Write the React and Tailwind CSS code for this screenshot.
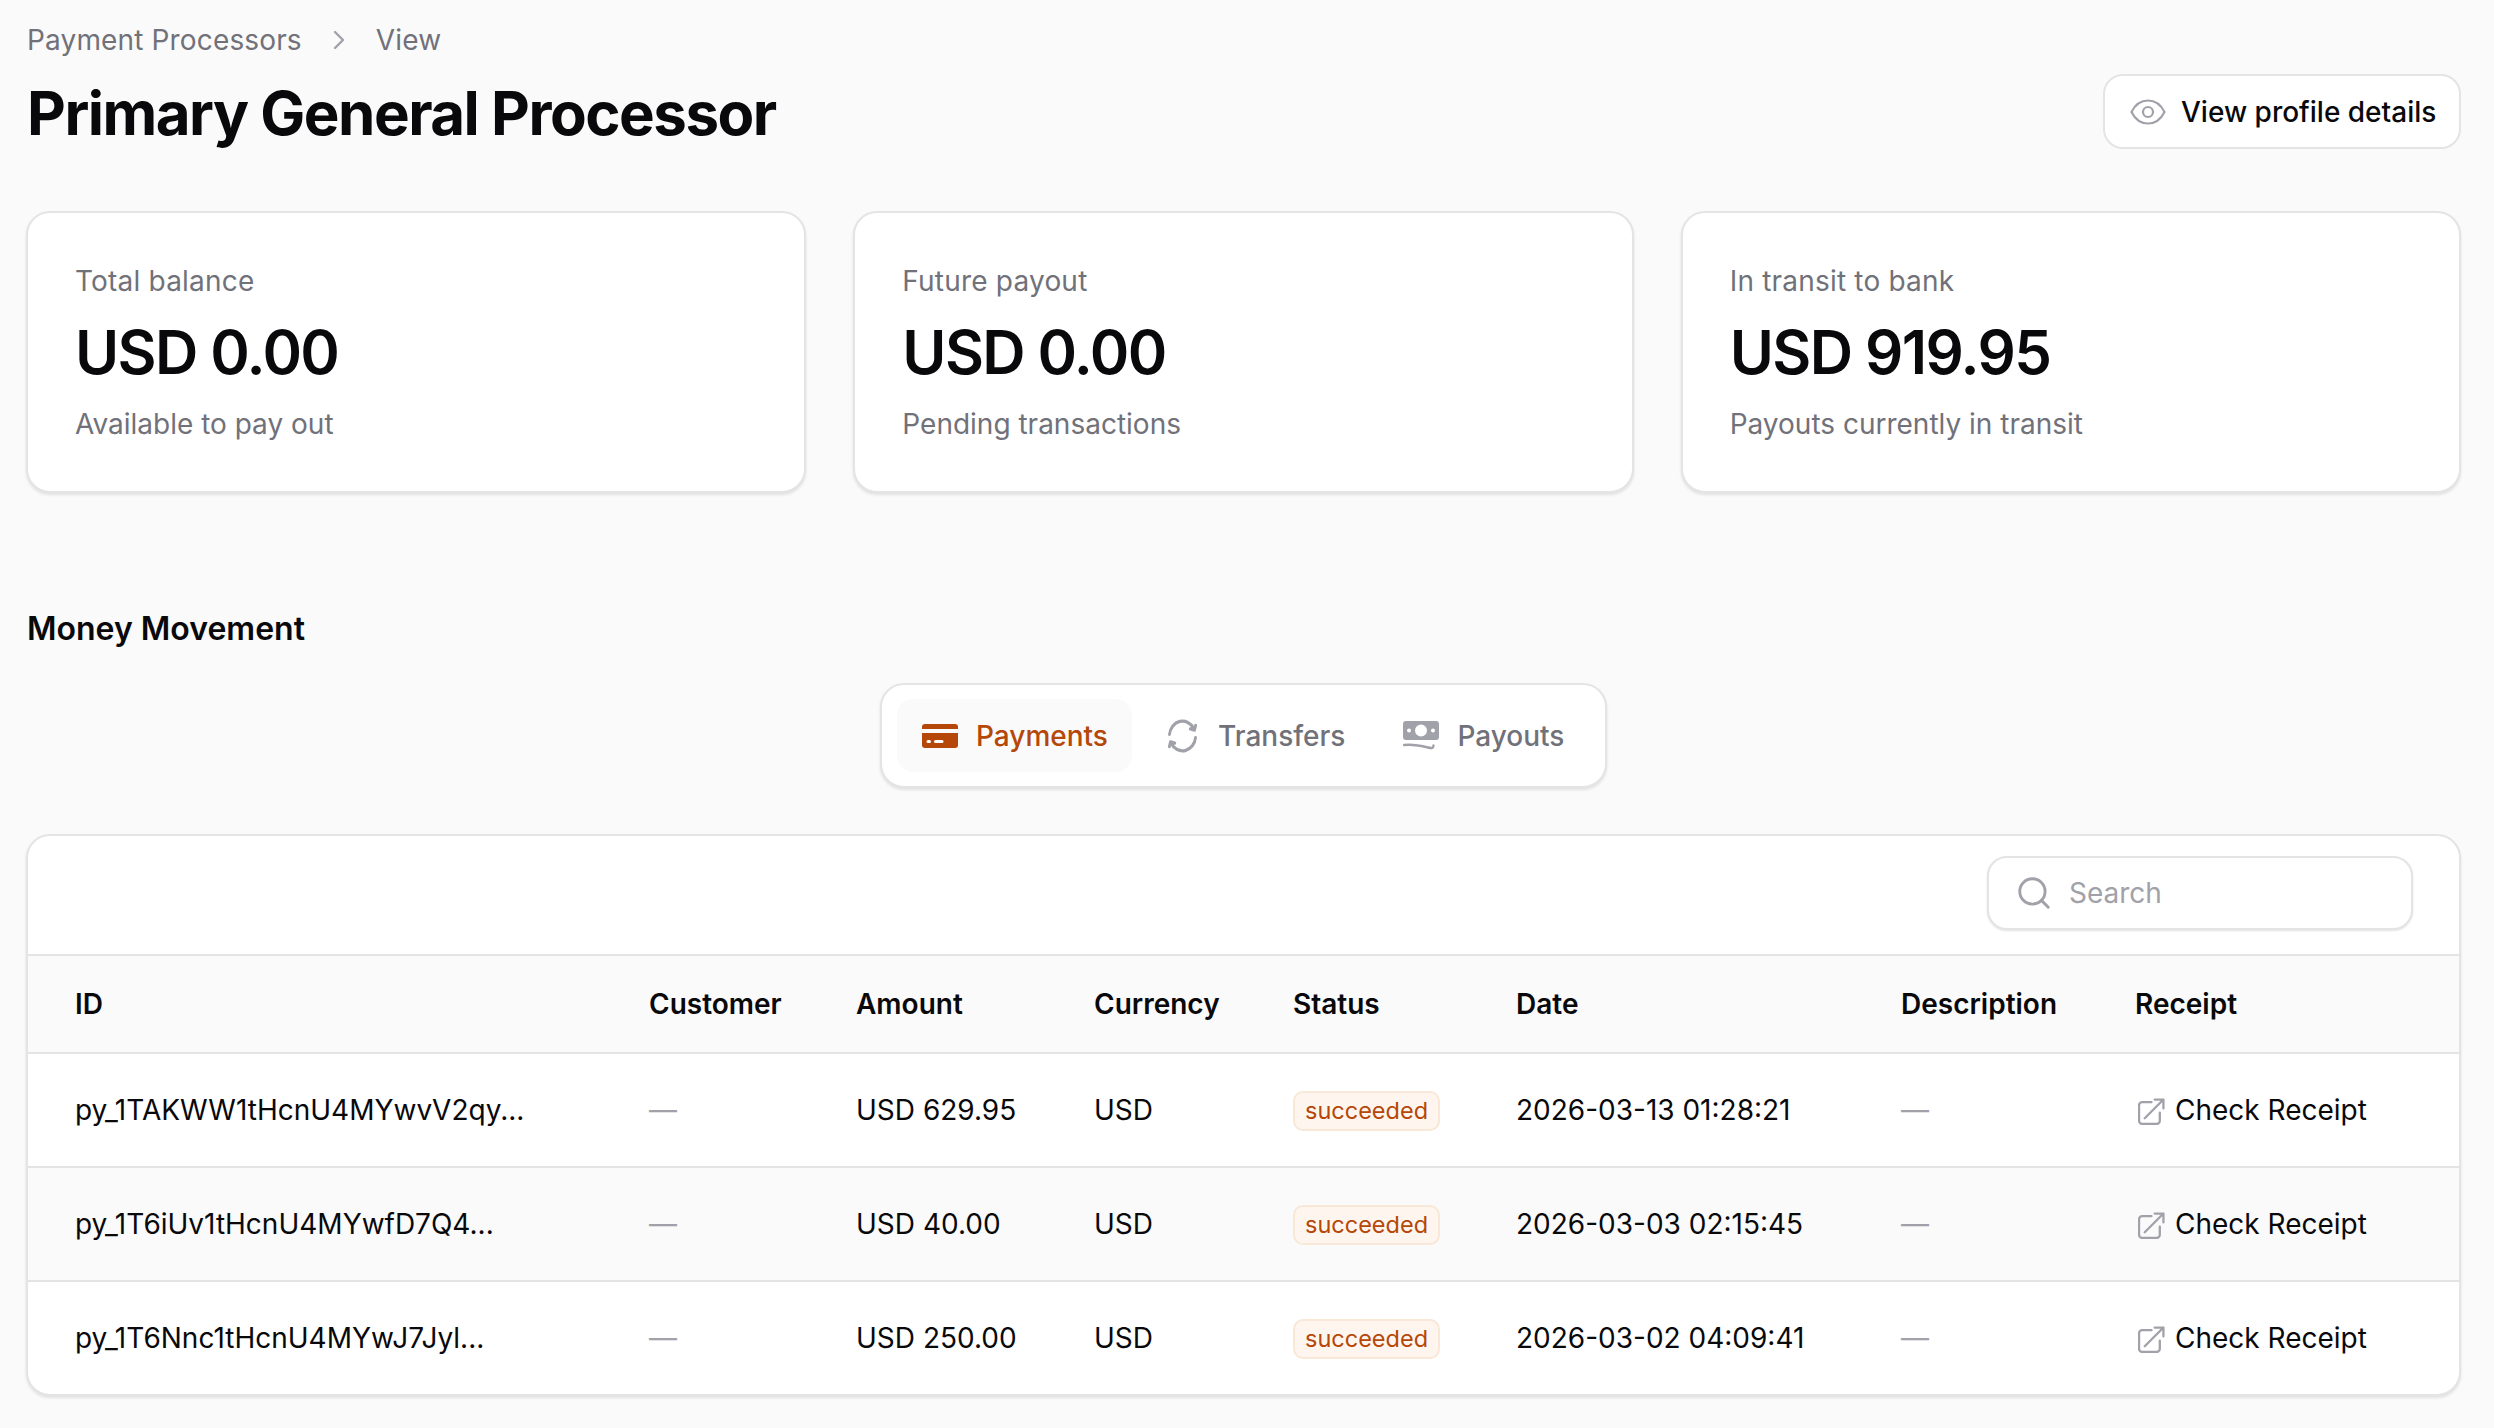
import React from "react";
import { ChevronRight, Search } from "lucide-react";

const FONT = "[font-family:Inter,'Noto_Sans',sans-serif]";

const CardIcon = ({ className }) => (
  <svg viewBox="0 0 36 24" className={className} aria-hidden="true">
    <path d="M3 0h30a3 3 0 0 1 3 3v2H0V3a3 3 0 0 1 3-3Z" fill="#b54708" />
    <path d="M0 9h36v12a3 3 0 0 1-3 3H3a3 3 0 0 1-3-3V9Z" fill="#b54708" />
    <rect x="4.5" y="16" width="4.5" height="3" rx="1.5" fill="#fff" />
    <rect x="12" y="16" width="9.5" height="3" rx="1.5" fill="#fff" />
  </svg>
);

const TransferIcon = ({ className }) => (
  <svg viewBox="0 0 24 24" preserveAspectRatio="none" fill="none" stroke="#a1a1aa" strokeWidth="1.9" strokeLinecap="round" strokeLinejoin="round" className={className} aria-hidden="true">
    <path d="M20.453 12.893A8.5 8.5 0 0 1 4.638 16.25l-.25-.433M3.547 11.107A8.5 8.5 0 0 1 19.362 7.75l.25.433M3.494 18.066l.732-2.732 2.732.732m10.085-8.132 2.732.732.732-2.732" />
  </svg>
);

const MoneyIcon = ({ className }) => (
  <svg viewBox="0 0 36 30" className={className} aria-hidden="true">
    <path fillRule="evenodd" clipRule="evenodd" d="M3 0h30a3 3 0 0 1 3 3v13a3 3 0 0 1-3 3H3a3 3 0 0 1-3-3V3a3 3 0 0 1 3-3Zm15 3.500a6 6 0 1 0 0 12 6 6 0 0 0 0-12ZM6 7.500a2 2 0 1 0 0 4 2 2 0 0 0 0-4Zm24 0a2 2 0 1 0 0 4 2 2 0 0 0 0-4Z" fill="#a1a1aa" />
    <path d="M1 24c10-1 18 1 24 2.500 4 1 5.500 .5 5.500-2" fill="none" stroke="#a1a1aa" strokeWidth="2.400" strokeLinecap="round" />
  </svg>
);

const EyeIcon = ({ className }) => (
  <svg viewBox="0 0 36 26" fill="none" stroke="#a1a1aa" strokeWidth="2.200" className={className} aria-hidden="true">
    <path d="M1.500 13C5 6 11 1.500 18 1.500S31 6 34.500 13C31 20 25 24.500 18 24.500S5 20 1.500 13Z" strokeLinejoin="round" />
    <circle cx="18" cy="13" r="5" />
  </svg>
);

const ExternalIcon = ({ className }) => (
  <svg viewBox="0 0 26 26" fill="none" stroke="#a1a1aa" strokeWidth="2.200" strokeLinecap="round" strokeLinejoin="round" className={className} aria-hidden="true">
    <path d="M13 4H4a3 3 0 0 0-3 3v15a3 3 0 0 0 3 3h14a3 3 0 0 0 3-3v-8" />
    <path d="M6.500 19.500 24.500 1.500M16 1.500h8.500V10" />
  </svg>
);

const stats = [
  { label: "Total balance", value: "USD 0.00", note: "Available to pay out" },
  { label: "Future payout", value: "USD 0.00", note: "Pending transactions" },
  { label: "In transit to bank", value: "USD 919.95", note: "Payouts currently in transit" },
];

const rows = [
  { id: "py_1TAKWW1tHcnU4MYwvV2qy...", amount: "USD 629.95", date: "2026-03-13 01:28:21", cls: "h-[114px] border-b-2 border-[#e4e4e7]" },
  { id: "py_1T6iUv1tHcnU4MYwfD7Q4...", amount: "USD 40.00", date: "2026-03-03 02:15:45", cls: "h-[114px] border-b-2 border-[#e4e4e7] bg-[#fafafa]" },
  { id: "py_1T6Nnc1tHcnU4MYwJ7Jyl...", amount: "USD 250.00", date: "2026-03-02 04:09:41", cls: "h-[113px]" },
];

const heads = ["ID", "Customer", "Amount", "Currency", "Status", "Date", "Description", "Receipt"];

const Dash = () => <span className="text-[#a1a1aa]">—</span>;

export default function App() {
  return (
    <div className={`${FONT} w-[2494px] h-[1428px] overflow-hidden bg-[#fafafa] pl-[26px] pr-[33px] pt-[22px] text-[28px] leading-[40px] text-[#09090b]`}>
      <div className="flex items-start justify-between">
        <div>
          <div className="flex items-center h-[36px] pl-[1px] text-[#71717a] tracking-[0.15px]">
            <span>Payment Processors</span>
            <ChevronRight className="w-[32px] h-[32px] mx-[21px] text-[#a1a1aa]" strokeWidth={1.8} />
            <span>View</span>
          </div>
          <h1 className="mt-[19px] pl-[1px] text-[60px] leading-[72px] font-bold tracking-[-1.5px]">Primary General Processor</h1>
        </div>
        <button className="mt-[52px] flex items-center gap-[15px] h-[75px] w-[358px] pl-[25px] rounded-[20px] border-2 border-[#e4e4e7] bg-white font-medium text-[#09090b]">
          <EyeIcon className="w-[36px] h-[26px]" />
          <span>View profile details</span>
        </button>
      </div>

      <div className="mt-[62px] grid grid-cols-3 gap-[47px]">
        {stats.map((s) => (
          <div key={s.label} className="h-[282px] rounded-[24px] border-2 border-[#e4e4e7] bg-white pl-[47px] pt-[48px] shadow-[0_2px_3px_rgba(10,13,18,0.10)]">
            <div className="text-[#71717a] tracking-[0.2px]">{s.label}</div>
            <div className="mt-[15px] text-[60px] leading-[72px] font-semibold tracking-[-1.6px]">{s.value}</div>
            <div className="mt-[16px] text-[#71717a]">{s.note}</div>
          </div>
        ))}
      </div>

      <h2 className="mt-[114px] pl-[1px] text-[32px] leading-[44px] font-semibold">Money Movement</h2>

      <div className="mt-[32px] flex justify-center">
        <div className="flex items-center h-[105px] w-[727px] rounded-[24px] border-2 border-[#e4e4e7] bg-white px-[15px] shadow-[0_2px_3px_rgba(10,13,18,0.10)]">
          <div className="flex items-center gap-[18px] h-[73px] w-[235px] pl-[25px] rounded-[16px] bg-[#fafafa] font-medium text-[#b54708]">
            <CardIcon className="w-[36px] h-[24px]" />
            <span>Payments</span>
          </div>
          <div className="flex items-center gap-[17px] ml-[32px] text-[#71717a] font-medium">
            <TransferIcon className="w-[37px] h-[42px]" />
            <span>Transfers</span>
          </div>
          <div className="flex items-center gap-[18px] ml-[58px] text-[#71717a] font-medium">
            <MoneyIcon className="w-[36px] h-[30px]" />
            <span>Payouts</span>
          </div>
        </div>
      </div>

      <div className="mt-[46px] rounded-[24px] border-2 border-[#e4e4e7] bg-white overflow-hidden shadow-[0_2px_3px_rgba(10,13,18,0.10)]">
        <div className="flex justify-end h-[118px] pt-[20px] pr-[46px]">
          <div className="flex items-center gap-[16px] h-[74px] w-[426px] pl-[26px] rounded-[20px] border-2 border-[#e4e4e7] bg-white shadow-[0_1px_2px_rgba(10,13,18,0.12)] text-[#a1a1aa]">
            <Search className="w-[38px] h-[38px]" strokeWidth={1.8} />
            <span>Search</span>
          </div>
        </div>
        <table className="w-full table-fixed border-collapse">
          <colgroup>
            <col className="w-[621px]" />
            <col className="w-[207px]" />
            <col className="w-[238px]" />
            <col className="w-[199px]" />
            <col className="w-[223px]" />
            <col className="w-[385px]" />
            <col className="w-[234px]" />
            <col />
          </colgroup>
          <thead>
            <tr className="h-[98px] bg-[#fafafa] border-y-2 border-[#e4e4e7]">
              {heads.map((h, i) => (
                <th key={h} className={`text-left font-semibold ${i === 0 ? "pl-[47px]" : ""}`}>{h}</th>
              ))}
            </tr>
          </thead>
          <tbody>
            {rows.map((r) => (
              <tr key={r.id} className={r.cls}>
                <td className="pl-[47px]">{r.id}</td>
                <td><Dash /></td>
                <td>{r.amount}</td>
                <td>USD</td>
                <td>
                  <span className="inline-flex items-center h-[40px] px-[10px] rounded-[10px] border-2 border-[#f9e7d8] bg-[#fef6ee] text-[23.5px] leading-[32px] text-[#b54708]">succeeded</span>
                </td>
                <td>{r.date}</td>
                <td><Dash /></td>
                <td>
                  <span className="flex items-center gap-[10px]">
                    <ExternalIcon className="w-[27px] h-[27px] ml-[3px] mt-[2px]" />
                    <span>Check Receipt</span>
                  </span>
                </td>
              </tr>
            ))}
          </tbody>
        </table>
      </div>
    </div>
  );
}
